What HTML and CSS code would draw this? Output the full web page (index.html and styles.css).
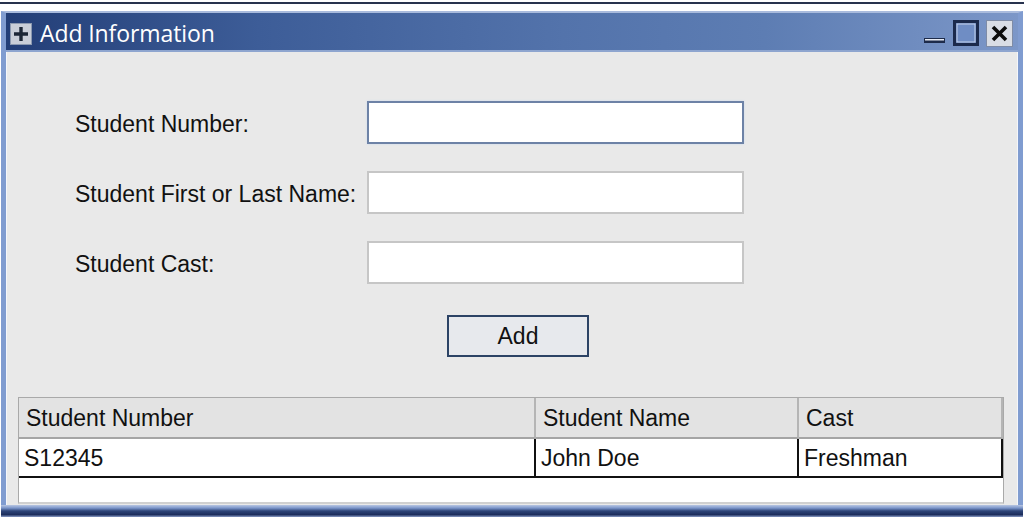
FILE: index.html
```html
<!DOCTYPE html>
<html lang="en">
 <head>
   <title>Add Information</title>
   <meta charset="utf-8"/>
   <link rel="stylesheet" href="styles.css">
 </head>

 <body>
   <div class="topline"></div>
   <div id="window">
      <header class="titlebar">
         <span class="sysicon">
            <svg width="22" height="22" viewBox="0 0 22 22">
               <rect x="0.5" y="0.5" width="21" height="21" fill="#c9ced8" stroke="#8c99b0"/>
               <path d="M11 4v14M4 11h14" stroke="#1c2636" stroke-width="3.4"/>
            </svg>
         </span>
         <h1>Add Information</h1>
         <div class="controls">
            <span class="btn-min">
               <svg width="22" height="10" viewBox="0 0 22 10">
                  <rect x="0" y="3" width="21" height="5" fill="#1d2b4a"/>
                  <rect x="1" y="4" width="19" height="1.5" fill="#e8ecf4"/>
               </svg>
            </span>
            <span class="btn-max">
               <svg width="26" height="26" viewBox="0 0 26 26">
                  <rect x="1.5" y="1.5" width="23" height="23" fill="#5c7cb6" stroke="#1b2a4c" stroke-width="3"/>
                  <rect x="4" y="4" width="18" height="18" fill="#6f8dc4" stroke="#c5d2ea" stroke-width="1"/>
               </svg>
            </span>
            <span class="btn-close">
               <svg width="27" height="27" viewBox="0 0 27 27">
                  <rect x="0.5" y="0.5" width="26" height="26" fill="#d9dde5" stroke="#7f8ca6"/>
                  <path d="M7 7l13 13M20 7L7 20" stroke="#0c0c0c" stroke-width="3.6"/>
               </svg>
            </span>
         </div>
      </header>

      <section class="content">
         <div class="form">
            <label>Student Number:</label>
            <div class="field focus"></div>
            <label>Student First or Last Name:</label>
            <div class="field"></div>
            <label>Student Cast:</label>
            <div class="field"></div>
         </div>
         <div class="add">Add</div>

         <div class="table">
            <div class="th">Student Number</div>
            <div class="th">Student Name</div>
            <div class="th">Cast</div>
            <div class="td">S12345</div>
            <div class="td">John Doe</div>
            <div class="td">Freshman</div>
            <div class="empty"></div>
         </div>
      </section>
      <div class="frame-bottom"></div>
   </div>
 </body>
</html>
```

FILE: styles.css
```css
/*####### reset #######*/
   *{margin:0; padding:0; box-sizing:border-box;}
   body{background-color:#fff; font-family:"Liberation Sans", Arial, sans-serif; color:#111; overflow:hidden;}

   .topline{height:2px; margin-top:2px; background-color:#28324e; margin-bottom:7px;}

/*####### window #######*/
   #window{margin-left:1px; width:1022px; border-left:5px solid #809cd0; border-right:5px solid #809cd0; border-top:2px solid #a9bbdd; background-color:#e9e9e9;}

   .titlebar{height:39px; display:flex; align-items:center; padding-left:4px; background:linear-gradient(90deg, #233e77 0%, #3d5d98 25%, #5373ab 55%, #5d7db3 75%, #7c97c8 100%); border-bottom:2px solid #8ea5cf;}
   .sysicon{display:flex; margin-top:4px;}
   .titlebar h1{font-family:"Open Sans", sans-serif; font-weight:normal; font-size:23px; color:#fff; margin-left:8px; margin-top:2px; letter-spacing:-0.1px;}

   .controls{margin-left:auto; display:flex; align-items:center; margin-right:5px; margin-top:3px;}
   .controls span{display:flex;}
   .btn-min{margin-top:14px; margin-right:7px;}
   .btn-max{margin-right:7px;}

/*####### content #######*/
   .content{height:453px; padding-top:49px; padding-left:69px; box-shadow:inset 1px 0 0 #f4f6fa, inset -1px 0 0 #f4f6fa;}

   .form{display:grid; grid-template-columns:292px 377px; grid-auto-rows:43px; row-gap:27px; align-items:center;}
   .form label{font-size:23px; margin-top:4px;}
   .field{height:43px; background-color:#fff; border:2px solid #c6c6c6;}
   .field.focus{border-color:#6d82a6; box-shadow:0 0 2px #c9d8ee;}

   .add{width:142px; height:42px; margin-top:31px; margin-left:372px; border:2px solid #2c4365; background-color:#e7e9ed; font-size:23px; text-align:center; line-height:38px;}

   .table{margin-top:40px; margin-left:-57px; width:986px; display:grid; grid-template-columns:517px 263px 1fr; border:1px solid #a9a9a9; border-bottom:2px solid #d0d0d0; background-color:#fff;}
   .th{height:41px; background-color:#e3e3e3; border-right:2px solid #b5b5b5; border-bottom:2px solid #a5a5a5; font-size:23px; line-height:41px; padding-left:7px;}
   .th:last-of-type{border-right:none; padding-left:6px;}
   .td{height:39px; border-bottom:2px solid #111; border-right:2px solid #111; font-size:23px; line-height:38px; padding-left:5px;}
   .td:last-of-type{padding-left:6px;}
   .empty{grid-column:1 / 4; height:24px; background-color:#fff;}

   .frame-bottom{height:12px; margin-left:-5px; margin-right:-5px; background:linear-gradient(#b8c6e2 0%, #7c96ca 25%, #2d4478 50%, #1c2d5c 80%, #8a9cc6 100%);}
```
